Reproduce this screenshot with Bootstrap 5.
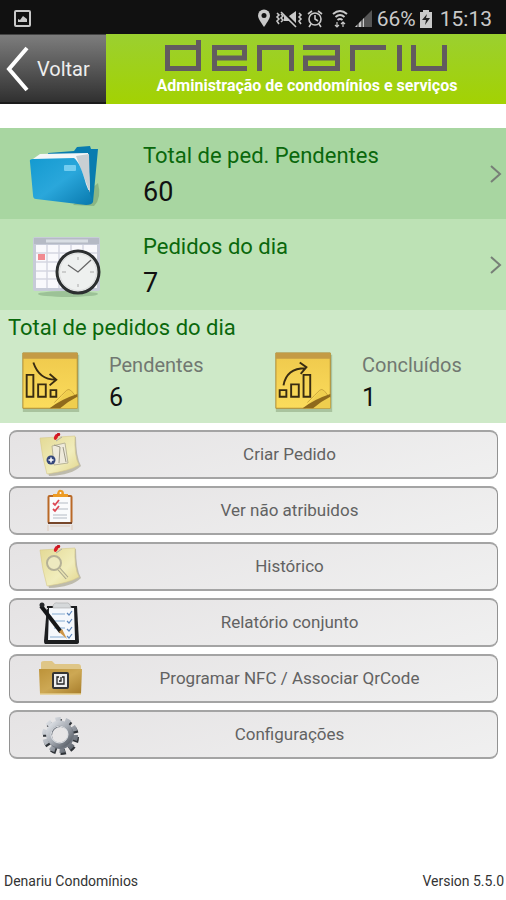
<!DOCTYPE html>
<html lang="pt">
<head>
<meta charset="utf-8">
<meta name="viewport" content="width=device-width, initial-scale=1">
<title>Denariu Condomínios</title>
<link href="https://cdn.jsdelivr.net/npm/bootstrap@5.3.0/dist/css/bootstrap.min.css" rel="stylesheet">
<style>
body{font-family:Roboto,"Noto Sans",sans-serif;background:#fff;color:#111}
svg{display:block;flex:none}
.statusbar{background:#111;color:#c9c9c9;height:34px;font-size:21px;line-height:34px;padding:3px 14px 0}
.topbar{height:70px;background:linear-gradient(#9bd030,#a3d202)}
.back{width:106px;background:linear-gradient(#7d7d7d,#303030);color:#eee;font-size:20px;border:0;border-top:1px solid #444;border-bottom:2px solid #1b1b1b;padding:0 0 0 6px;gap:7px}
.tagline{font-size:16px;line-height:20px;font-weight:700;color:#fff}
.brand{padding-top:6px;padding-left:2px}
.stat{height:91px;padding:10px 4px 10px 28px;color:#111;gap:39px}
.stat-icon{margin-top:6px}
.stat-a{background:#a8d6a1}
.stat-b{background:#bde2b5}
.summary{background:#cee9c8;padding-bottom:8px}
.summary h1{padding:0 8px 3px}
.green{color:#0a680c;font-size:22px;line-height:36px}
.value{font-size:27px;line-height:36px}
.sub{color:#717871;font-size:20px;line-height:32px}
.subvalue{font-size:25px;line-height:34px}
.half{padding-left:20px;gap:26px}
.menu{padding:7px 8px 0 9px;gap:7px}
.item{height:49px;border:1px solid #929292;border-top:2px solid #a4a4a4;border-bottom:2px solid #a4a4a4;border-radius:8px;background:linear-gradient(165deg,#e5e3e4,#f0f0f0);color:#626262;font-size:17px;padding:0 0 0 28px}
.foot{font-size:14px;line-height:20px;color:#333;padding:0 2px 9px 4px}
</style>
<script src="https://cdn.jsdelivr.net/npm/bootstrap@5.3.0/dist/js/bootstrap.bundle.min.js"></script>
</head>
<body>
<svg width="0" height="0" class="position-absolute" aria-hidden="true"><defs>
<linearGradient id="blue" x1="0" y1="0" x2="1" y2="1"><stop offset="0" stop-color="#149ad0"/><stop offset=".5" stop-color="#2aa7db"/><stop offset="1" stop-color="#0878ad"/></linearGradient>
<linearGradient id="gold" x1="0" y1="0" x2="0" y2="1"><stop offset="0" stop-color="#efc94c"/><stop offset="1" stop-color="#fbdc5c"/></linearGradient>
<linearGradient id="tan" x1="0" y1="0" x2="1" y2="1"><stop offset="0" stop-color="#bd9339"/><stop offset=".5" stop-color="#cda854"/><stop offset="1" stop-color="#a77d2b"/></linearGradient>
<linearGradient id="paper" x1="0" y1="0" x2="1" y2="1"><stop offset="0" stop-color="#e3d994"/><stop offset=".6" stop-color="#f1edbc"/><stop offset="1" stop-color="#e2d68d"/></linearGradient>
<linearGradient id="steel" x1="0" y1="0" x2="1" y2="1"><stop offset="0" stop-color="#e0e3e8"/><stop offset=".5" stop-color="#a6abb3"/><stop offset="1" stop-color="#555b64"/></linearGradient>
<g id="sticky"><path d="M3 4H62V64H3Z" fill="#657d50" opacity=".35"/><path d="M3 2H60V60H3Z" fill="url(#gold)" stroke="#ae8830"/><path d="M3 2H60V8H3Z" fill="#c49b45"/><path d="M34 60Q44 48 49 42Q51 39 54 43L60 49V60Z" fill="#efce4e"/><path d="M36 54Q44 46 49 41Q51 39 54 42L58 47" fill="none" stroke="#c9a53a"/><path d="M31 60Q42 51 60 45V48Q50 53 42 60Z" fill="#8f6a1c"/></g>
<g id="note"><path d="M4 6L38 4Q38 24 43 33Q34 42 11 43Q5 25 4 6Z" fill="#8a8564" opacity=".45"/><path d="M2 5L37 3Q36 23 41 32Q31 38 9 41Q4 24 2 5Z" fill="url(#paper)" stroke="#d6ca8c" stroke-width=".6"/><path d="M18 8L24 4" stroke="#aaa" /><ellipse cx="18" cy="4" rx="1.800" ry="3" fill="#d91d28" transform="rotate(25 18 4)"/><circle cx="20.500" cy="1.500" r="1.700" fill="#c8141f"/></g>
</defs></svg>
<div class="min-vh-100 d-flex flex-column">
<div class="statusbar d-flex align-items-center">
<svg width="17" height="18" viewBox="0 0 17 18" fill="none" stroke="#c9c9c9" stroke-width="2"><rect x="1" y="1" width="15" height="15" rx="1"/><path d="M4 12V9L6 10L9 6L13 9V12Z" fill="#c9c9c9" stroke="none"/></svg>
<svg class="ms-auto" width="116" height="20" viewBox="0 0 116 20" fill="none" stroke="#c9c9c9" stroke-width="1.600">
<path d="M7 18C3 12 1 9 1 6.500A6 6 0 0 1 13 6.500C13 9 11 12 7 18Z" fill="#c9c9c9" stroke="none"/><circle cx="7" cy="6.500" r="2.500" fill="#111" stroke="none"/>
<path d="M20 4l2 2-2 2 2 2-2 2 2 3M24 5l2 2-2 2 2 2-2 2M42 4l2 2-2 2 2 2-2 2 2 3"/><path d="M27 7H32L39 2V17L32 12H27Z" fill="#c9c9c9" stroke="none"/><path d="M25 2L40 17" stroke="#111" stroke-width="2.500"/><path d="M24 3L39 18"/>
<circle cx="58" cy="10" r="6"/><path d="M58 6V10L61 12M51 5L55 2M61 2L65 5M54 15L52 18M62 15L64 18"/>
<path d="M76 5Q83 -1 90 5M78.500 8Q83 4 87.500 8M80.500 11Q83 9 85.500 11" stroke-width="2"/><path d="M80 13V18M78 16L80 18L82 16M86 18V13M84 15L86 13L88 15" stroke-width="1.200"/>
<path d="M98 18L115 1V18Z" fill="#555" stroke="none"/><path d="M98 18L107 9V18Z" fill="#c9c9c9" stroke="none"/><path d="M101 14V18M105 10V18" stroke="#111" stroke-width="1"/></svg>
<span class="ps-1">66%</span>
<svg class="ms-1 me-2" width="12" height="18" viewBox="0 0 12 18"><path d="M3 0H9V2H12V18H0V2H3Z" fill="#c9c9c9"/><path d="M7 4L2 10H6L5 15L10 8H6Z" fill="#222"/></svg>
<span>15:13</span>
</div>
<header class="topbar d-flex">
<button class="back d-flex align-items-center" type="button"><svg width="24" height="46" viewBox="0 0 24 46" fill="none" stroke="#fff" stroke-width="4"><path d="M21 2L3 23L21 44"/></svg>Voltar</button>
<div class="brand flex-grow-1 d-flex flex-column align-items-center">
<svg role="img" aria-label="denariu" width="284" height="32" viewBox="0 0 284 32" fill="none" stroke="#625b5f" stroke-width="5"><path d="M33.500 0V28.500H2.500V7.500H33.500M82 28.500H49.500V7.500H79.500V18H49.500M94.500 31V7.500H126.500V31M138 7.500H172.500V28.500H140.500V18H172.500M187.500 31V7.500H221M234.500 5V31M248.500 5V28.500H279.500V5"/></svg>
<span class="tagline mt-1">Administração de condomínios e serviços</span>
</div>
</header>
<main class="pt-4">
<a href="#pendentes" class="stat stat-a d-flex align-items-center text-decoration-none">
<svg class="stat-icon" width="76" height="64" viewBox="0 0 76 64"><path d="M45 60L66 61Q74 53 70 38Z" fill="#527c4d" opacity=".35"/><path d="M20 8L46 6L49 2L62 1L63 4L70 4L65 57L25 54Z" fill="#087caf"/><path d="M5 14L12 9L60 8L62 45L10 46Z" fill="#f4f7f8"/><path d="M48 11L61 9L62 48L56 32Z" fill="#c8cfd3"/><path d="M2 17Q1 14 5 14L46 13Q52 17 58 39L65 57Q64 60 58 60L8 54Q5 54 5 50Z" fill="url(#blue)"/><rect x="36" y="20" width="12" height="6" rx="1" fill="#73cdf0"/></svg>
<span class="flex-grow-1"><span class="green d-block">Total de ped. Pendentes</span><span class="value d-block">60</span></span>
<svg width="12" height="20" viewBox="0 0 12 20" fill="none" stroke="#777f77" stroke-width="2"><path d="M1 2L10 10L1 18"/></svg>
</a>
<a href="#dia" class="stat stat-b d-flex align-items-center text-decoration-none">
<svg class="stat-icon" width="76" height="64" viewBox="0 0 76 64"><ellipse cx="40" cy="58" rx="30" ry="3" fill="#7ba27a" opacity=".5"/><rect x="5" y="1" width="67" height="54" rx="2" fill="#c7cbd8"/><path d="M6 2H71V8H6Z" fill="#b5bac5"/><path d="M18 5H60" stroke="#d9dee4" stroke-width="3"/><path d="M8 9H69V52H8Z" fill="#f9f9fc"/><path d="M19 9V52M31 9V52M43 9V52M55 9V52M8 17H69M8 26H69M8 35H69M8 43H69" stroke="#d5d6e1" stroke-width="1.500"/><rect x="10" y="18" width="7" height="6" fill="#f18a90"/><circle cx="50" cy="36" r="21" fill="#eef0ef" stroke="#2c2f30" stroke-width="3"/><circle cx="50" cy="36" r="18.500" fill="none" stroke="#dcdddd"/><path d="M50 21V24M50 48V51M34 36H38M62 36H66" stroke="#aaa"/><path d="M40 29L50 36L63 24" fill="none" stroke="#666" stroke-width="1.300"/></svg>
<span class="flex-grow-1"><span class="green d-block">Pedidos do dia</span><span class="value d-block">7</span></span>
<svg width="12" height="20" viewBox="0 0 12 20" fill="none" stroke="#777f77" stroke-width="2"><path d="M1 2L10 10L1 18"/></svg>
</a>
<section class="summary">
<h1 class="green fw-normal m-0">Total de pedidos do dia</h1>
<div class="row g-0">
<div class="col-6 half d-flex align-items-center"><svg width="63" height="63" viewBox="0 0 66 66"><use href="#sticky"/><g fill="none" stroke="#392c12" stroke-width="2"><path d="M7 25H14V48H7ZM19 35H27V48H19ZM32 41H38V48H32ZM14 12Q20 30 37 30M31 24L38 30L31 36"/></g></svg><div><div class="sub">Pendentes</div><div class="subvalue">6</div></div></div>
<div class="col-6 half d-flex align-items-center"><svg width="63" height="63" viewBox="0 0 66 66"><use href="#sticky"/><g fill="none" stroke="#392c12" stroke-width="2"><path d="M7 41H14V48H7ZM19 35H27V48H19ZM32 25H39V48H32ZM11 36Q14 18 34 18M28 12L35 17L29 24"/></g></svg><div><div class="sub">Concluídos</div><div class="subvalue">1</div></div></div>
</div>
</section>
<nav class="menu d-flex flex-column" aria-label="Menu">
<button type="button" class="item d-flex align-items-center"><svg width="44" height="44" viewBox="0 0 44 44"><use href="#note"/><path d="M14 13L27 10L30 30L16 32Z" fill="#eeeadb" stroke="#b9b597"/><path d="M16 12L22 14L21 30M25 14L28 29" fill="none" stroke="#9c9987"/><circle cx="13" cy="27" r="4.500" fill="#34477c"/><path d="M10.500 27H15.500M13 24.500V29.500" stroke="#fff" stroke-width="1.500"/></svg><span class="flex-grow-1">Criar Pedido</span></button>
<button type="button" class="item d-flex align-items-center"><svg width="44" height="44" viewBox="0 0 44 44"><rect x="10.500" y="7" width="23" height="27" rx="1" fill="#fafbfc" stroke="#b96927" stroke-width="2"/><path d="M10 34H34" stroke="#77462a" stroke-width="2"/><path d="M15 8V5H19Q20 0 23 1Q26 1 26 5H30V8Z" fill="#ed9b25"/><circle cx="22.500" cy="4" r="1" fill="#fff"/><path d="M20 14H30M20 20H30M15 26H29M15 29H29" stroke="#ccd1d6" stroke-width="1.500"/><path d="M15 14L17 16L21 11M15 20L17 22L21 17" fill="none" stroke="#dc4853" stroke-width="1.800"/><path d="M10 36V42M34 36V41M12 37H32" stroke="#d7b8a0" opacity=".6"/></svg><span class="flex-grow-1">Ver não atribuidos</span></button>
<button type="button" class="item d-flex align-items-center"><svg width="44" height="44" viewBox="0 0 44 44"><use href="#note"/><circle cx="16" cy="18" r="7" fill="#eeeac0" stroke="#b5b197" stroke-width="2"/><path d="M21 24L29 33" stroke="#aaa78c" stroke-width="3.500"/><path d="M21 24L29 33" stroke="#e9e3b2" stroke-width="1.800"/></svg><span class="flex-grow-1">Histórico</span></button>
<button type="button" class="item d-flex align-items-center"><svg width="44" height="44" viewBox="0 0 44 44"><path d="M9 5H39L41 41Q41 43 38 43H7Q6 43 6 40Z" fill="#1d1e20"/><path d="M11 7H36L37 39H10Z" fill="#f5f8fc"/><path d="M15 5Q16 1 20 2H28Q32 1 33 7H15Z" fill="#d5d8da" stroke="#aaa" stroke-width=".600"/><path d="M14 13H27M15 20H27M16 27H27M12 36H27" stroke="#aac5df" stroke-width="1.300"/><path d="M29 12L31 14L34 10M29 20L31 22L34 18M29 28L31 30L34 26M29 35L31 37L34 33" fill="none" stroke="#5d87bc" stroke-width="1.200"/><path d="M3 5L23 31" stroke="#151618" stroke-width="4"/><circle cx="4" cy="4" r="2.500" fill="#26282b"/><path d="M21 31L24 28L29 38Z" fill="#cd9546"/><path d="M7 6L10 8" stroke="#eee"/></svg><span class="flex-grow-1">Relatório conjunto</span></button>
<button type="button" class="item d-flex align-items-center"><svg width="44" height="44" viewBox="0 0 44 44"><path d="M3 10V6Q3 4 6 4H14L17 7H40Q43 7 43 10V16H3Z" fill="#dfc687"/><path d="M1 12H44L43 37H2Z" fill="url(#tan)"/><path d="M2 37H43" stroke="#e5cd8b" stroke-width="1.500"/><rect x="15" y="16" width="15" height="15" rx="1" fill="#eee" stroke="#333" stroke-width="2"/><path d="M21 20H19V27H26V20H24M23 20V24H21" fill="none" stroke="#222" stroke-width="1.300"/></svg><span class="flex-grow-1">Programar NFC / Associar QrCode</span></button>
<button type="button" class="item d-flex align-items-center"><svg width="44" height="44" viewBox="0 0 44 44"><g fill="none"><circle cx="23" cy="24" r="15" stroke="#2f3338" stroke-width="6" stroke-dasharray="5 4.420"/><circle cx="22" cy="22" r="15" stroke="url(#steel)" stroke-width="6" stroke-dasharray="5 4.420"/><circle cx="22.500" cy="22.500" r="11" stroke="#717780" stroke-width="5"/><circle cx="21.500" cy="21" r="11" stroke="url(#steel)" stroke-width="5"/><circle cx="21.500" cy="21.500" r="8.500" stroke="#e0e3e7"/></g></svg><span class="flex-grow-1">Configurações</span></button>
</nav>
</main>
<footer class="foot d-flex justify-content-between mt-auto"><span>Denariu Condomínios</span><span>Version 5.5.0</span></footer>
</div>
</body>
</html>
